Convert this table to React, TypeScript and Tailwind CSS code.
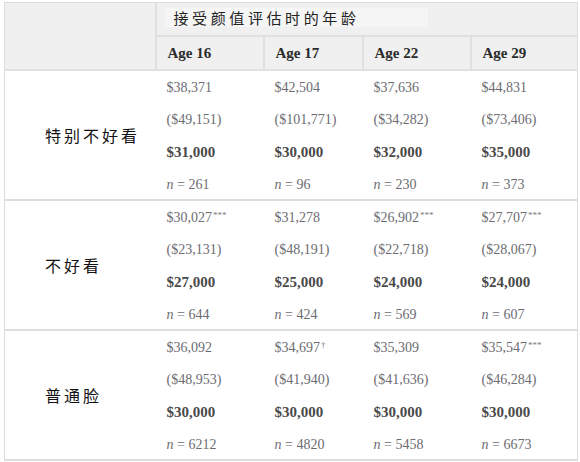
const AGES = ["Age 16", "Age 17", "Age 22", "Age 29"];

type Cell = { mean: string; mark?: string; sd: string; median: string; n: string };

const GROUPS: { label: string; cells: Cell[] }[] = [
  {
    label: "特别不好看",
    cells: [
      { mean: "$38,371", sd: "($49,151)", median: "$31,000", n: "261" },
      { mean: "$42,504", sd: "($101,771)", median: "$30,000", n: "96" },
      { mean: "$37,636", sd: "($34,282)", median: "$32,000", n: "230" },
      { mean: "$44,831", sd: "($73,406)", median: "$35,000", n: "373" },
    ],
  },
  {
    label: "不好看",
    cells: [
      { mean: "$30,027", mark: "***", sd: "($23,131)", median: "$27,000", n: "644" },
      { mean: "$31,278", sd: "($48,191)", median: "$25,000", n: "424" },
      { mean: "$26,902", mark: "***", sd: "($22,718)", median: "$24,000", n: "569" },
      { mean: "$27,707", mark: "***", sd: "($28,067)", median: "$24,000", n: "607" },
    ],
  },
  {
    label: "普通脸",
    cells: [
      { mean: "$36,092", sd: "($48,953)", median: "$30,000", n: "6212" },
      { mean: "$34,697", mark: "†", sd: "($41,940)", median: "$30,000", n: "4820" },
      { mean: "$35,309", sd: "($41,636)", median: "$30,000", n: "5458" },
      { mean: "$35,547", mark: "***", sd: "($46,284)", median: "$30,000", n: "6673" },
    ],
  },
];

const serif = "font-['Liberation_Serif','DejaVu_Serif',serif]";
const cjk = "font-['Noto_Sans_CJK_SC','Noto_Sans',sans-serif]";
const COLS = ["w-[151px]", "w-[108px]", "w-[99px]", "w-[108px]", "w-[107px]"];

export default function App() {
  return (
    <div className="w-[580px] h-[462px] bg-white pt-[2px] pl-[4px]">
      <table className={`w-[573px] table-fixed border-collapse border border-[#dcdcdc] ${serif}`}>
        <colgroup>
          {COLS.map((c, i) => (
            <col key={i} className={c} />
          ))}
        </colgroup>
        <thead className="bg-[#f0f0f0]">
          <tr className="h-[33px] border-b-2 border-[#e0e0e0]">
            <th rowSpan={2} className="border-r-2 border-[#e0e0e0]" />
            <th colSpan={4} className="p-0 text-left align-middle">
              <span
                className={`ml-[8px] inline-block w-[263px] bg-[#f5f5f5] pl-[9px] text-[15px] leading-[19px] font-normal tracking-[3.6px] text-[#222] ${cjk}`}
              >
                接受颜值评估时的年龄
              </span>
            </th>
          </tr>
          <tr className="h-[34px] border-b-2 border-[#e0e0e0]">
            {AGES.map((a, i) => (
              <th
                key={a}
                className={`pl-[11px] pt-[1px] text-left text-[15px] font-bold text-[#2b2b2b] ${i < 3 ? "border-r-2 border-[#e0e0e0]" : ""}`}
              >
                {a}
              </th>
            ))}
          </tr>
        </thead>
        <tbody>
          {GROUPS.map((g) =>
            [0, 1, 2, 3].map((r) => (
              <tr
                key={g.label + r}
                className={`${r % 2 ? "h-[33px]" : "h-[32px]"} ${r === 3 ? "border-b-2 border-[#dedede]" : ""}`}
              >
                {r === 0 && (
                  <td rowSpan={4} className="pl-[40px] pt-[3px] align-middle">
                    <span className={`text-[16px] tracking-[3px] text-[#111] ${cjk}`}>{g.label}</span>
                  </td>
                )}
                {g.cells.map((c, i) => (
                  <td key={i} className="pl-[11px] pt-[3px] whitespace-nowrap align-middle text-[14px]">
                    {r === 0 && (
                      <span className="text-[#6c6c72]">
                        {c.mean}
                        {c.mark && <sup className="ml-[1px] text-[9px] text-[#777]">{c.mark}</sup>}
                      </span>
                    )}
                    {r === 1 && <span className="text-[#6c6c72]">{c.sd}</span>}
                    {r === 2 && <span className="text-[15px] font-bold text-[#4a4a4a]">{c.median}</span>}
                    {r === 3 && (
                      <span className="text-[#6c6c72]">
                        <i>n</i> = {c.n}
                      </span>
                    )}
                  </td>
                ))}
              </tr>
            ))
          )}
        </tbody>
      </table>
    </div>
  );
}
